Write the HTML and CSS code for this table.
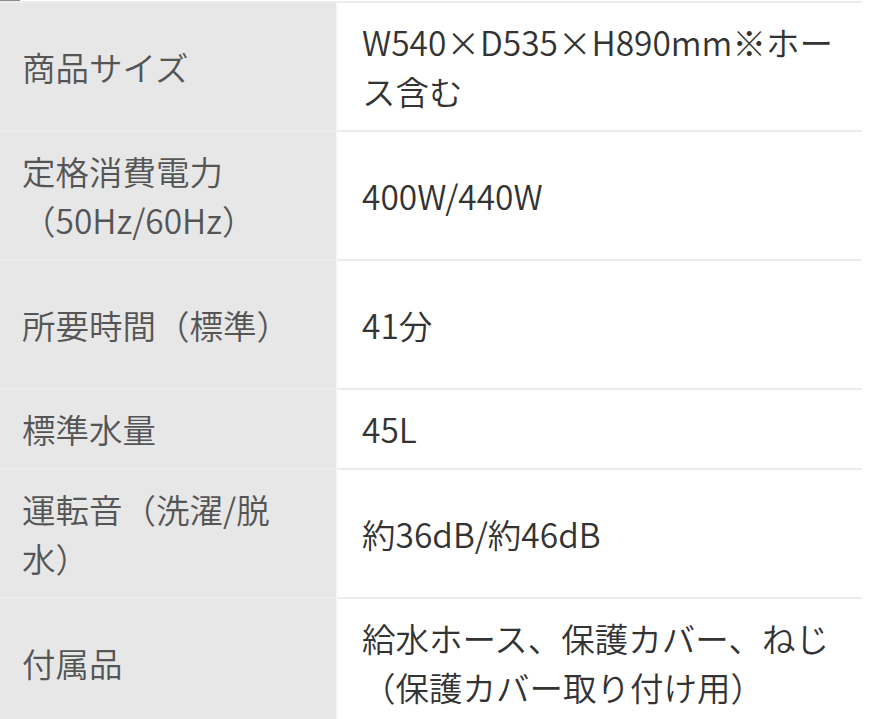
FILE: index.html
```html
<!DOCTYPE html>
<html lang="ja">
<head>
  <meta charset="UTF-8">
  <meta name="viewport" content="width=device-width, initial-scale=1">
  <title>仕様</title>
  <link rel="stylesheet" href="styles.css">
</head>
<body>

  <div class="edge"></div>

  <table class="spec">
    <tr>
      <th>商品サイズ</th>
      <td>W540×D535×H890mm※ホース含む</td>
    </tr>
    <tr>
      <th>定格消費電力（50Hz/60Hz）</th>
      <td>400W/440W</td>
    </tr>
    <tr class="tall">
      <th>所要時間（標準）</th>
      <td>41分</td>
    </tr>
    <tr>
      <th>標準水量</th>
      <td>45L</td>
    </tr>
    <tr>
      <th>運転音（洗濯/脱水）</th>
      <td>約36dB/約46dB</td>
    </tr>
    <tr>
      <th>付属品</th>
      <td>給水ホース、保護カバー、ねじ（保護カバー取り付け用）</td>
    </tr>
  </table>

</body>
</html>
```

FILE: styles.css
```css
body {
  margin: 0;
  background: #fff;
  font-family: "Noto Sans CJK JP", "Noto Sans", sans-serif;
  overflow: hidden;
}

.edge {
  width: 20px;
  height: 1px;
  background-color: #8a8a8a;
}

.spec {
  width: 862px;
  border-collapse: separate;
  border-spacing: 0;
  font-size: 33.5px;
  line-height: 49px;
}

.spec th,
.spec td {
  border-top: 2px solid #ececec;
  padding: 14px 22px 15px;
  vertical-align: middle;
  text-align: left;
  font-weight: 350;
}

.spec th {
  width: 292px;
  background-color: #e7e7e7;
  color: #555;
  border-right: 2px solid #f7f7f7;
}

.spec td {
  padding-left: 24px;
  padding-right: 24px;
  color: #333;
}

.spec tr.tall th,
.spec tr.tall td {
  height: 98px;
}
```
